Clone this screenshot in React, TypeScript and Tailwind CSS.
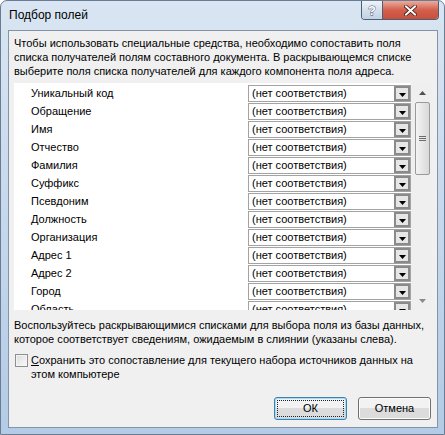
import React from "react";

const fields = [
  "Уникальный код",
  "Обращение",
  "Имя",
  "Отчество",
  "Фамилия",
  "Суффикс",
  "Псевдоним",
  "Должность",
  "Организация",
  "Адрес 1",
  "Адрес 2",
  "Город",
  "Область",
];

function Combo() {
  return (
    <div className="flex h-[17px] w-[163px] items-center border border-[#a3a3a3] bg-white">
      <span className="flex-1 pl-[3px] leading-[15px] whitespace-nowrap">(нет соответствия)</span>
      <div className="flex h-[15px] w-[16px] items-end justify-center border-2 border-[#8a8a8a] bg-[#e6e6e6] pb-[2px]">
        <svg width="7" height="4" viewBox="0 0 7 4">
          <path d="M0 0h7L3.5 4z" fill="#000" />
        </svg>
      </div>
    </div>
  );
}

function ScrollBar() {
  return (
    <div className="flex w-[21px] flex-col items-center bg-[#efefef] pl-[2px]">
      <div className="flex h-[19px] items-center justify-center">
        <svg width="7" height="4" viewBox="0 0 7 4">
          <path d="M3.5 0L7 4H0z" fill="#505050" />
        </svg>
      </div>
      <div className="flex h-[73px] w-[15px] items-center justify-center rounded-[2px] border border-[#9a9a9a] bg-gradient-to-r from-[#f4f4f4] to-[#d9d9d9]">
        <svg width="7" height="6" viewBox="0 0 7 6">
          <path d="M0 0.5h7M0 2.5h7M0 4.5h7" stroke="#6d6d6d" strokeWidth="1" />
        </svg>
      </div>
      <div className="flex-1" />
      <div className="flex h-[18px] items-center justify-center">
        <svg width="7" height="4" viewBox="0 0 7 4">
          <path d="M0 0h7L3.5 4z" fill="#8a8a8a" />
        </svg>
      </div>
    </div>
  );
}

function Button({ children, focused }: { children: React.ReactNode; focused?: boolean }) {
  return (
    <div
      className={
        "flex h-[23px] w-[73px] items-center justify-center rounded-[3px] border bg-gradient-to-b from-[#f2f2f2] from-50% to-[#dcdcdc] to-50% " +
        (focused ? "border-[#3c7fb1] shadow-[inset_0_0_0_1px_#a7dbf6]" : "border-[#707070] shadow-[inset_0_0_0_1px_#fcfcfc]")
      }
    >
      {focused ? (
        <div className="flex h-[17px] w-[67px] items-center justify-center border border-dotted border-[#222]">
          {children}
        </div>
      ) : (
        children
      )}
    </div>
  );
}

export default function App() {
  return (
    <div
      className="h-[435px] w-[445px] overflow-hidden rounded-t-[7px] border border-[#6a7c92] bg-gradient-to-b from-[#d9e5f2] to-[#b3cbe6] text-[11px] text-black"
      style={{ fontFamily: '"Liberation Sans", Arial, sans-serif' }}
    >
      <div className="flex h-[29px] items-start">
        <div className="pl-[8px] pt-[7px] text-[12px] leading-[15px] text-black">Подбор полей</div>
        <div className="ml-auto mr-[5px] flex h-[19px] overflow-hidden rounded-b-[4px] border border-t-0 border-[#4e5f75]">
          <div className="flex w-[21px] items-center justify-center border-r border-[#4e5f75] bg-gradient-to-b from-[#eef3f9] via-[#d3dfec] to-[#c2d2e5]">
            <span className="text-[13px] font-bold leading-none text-white [-webkit-text-stroke:0.8px_#3a4a5e] [paint-order:stroke]">?</span>
          </div>
          <div className="flex w-[55px] items-center justify-center bg-gradient-to-b from-[#e9ab9e] via-[#d35f4c] to-[#c9503b]">
            <svg width="13" height="11" viewBox="0 0 13 11">
              <path d="M2 1.5l9 8M11 1.5l-9 8" stroke="#3b1b17" strokeWidth="3.6" strokeLinecap="square" />
              <path d="M2 1.5l9 8M11 1.5l-9 8" stroke="#fff" strokeWidth="2" strokeLinecap="square" />
            </svg>
          </div>
        </div>
      </div>

      <div className="ml-[7px] flex h-[398px] w-[430px] flex-col border border-[#8593a6] bg-[#f0f0f0] pl-[5px]">
        <p className="mt-[5px] w-[410px] leading-[14px]">
          Чтобы использовать специальные средства, необходимо сопоставить поля списка получателей полям
          составного документа. В раскрывающемся списке выберите поля списка получателей для каждого
          компонента поля адреса.
        </p>

        <div className="mt-[5px] flex h-[227px] w-[418px] overflow-hidden">
          <div className="w-[397px] bg-white pt-px">
            {fields.map((f) => (
              <div key={f} className="flex h-[18px] items-center">
                <div className="w-[234px] pl-[17px] whitespace-nowrap">{f}</div>
                <Combo />
              </div>
            ))}
          </div>
          <ScrollBar />
        </div>

        <p className="mt-[8px] leading-[14px]">
          Воспользуйтесь раскрывающимися списками для выбора поля из базы данных,
          <br />
          которое соответствует сведениям, ожидаемым в слиянии (указаны слева).
        </p>

        <div className="mt-[7px] flex items-start">
          <div className="mt-px ml-px h-[13px] w-[13px] shrink-0 border border-[#8e8f8f] bg-gradient-to-br from-[#dcdcdc] to-[#fbfbfb] shadow-[inset_0_0_0_1px_#f4f4f4]" />
          <p className="ml-[3px] w-[390px] leading-[14px] first-letter:underline">
            Сохранить это сопоставление для текущего набора источников данных на этом компьютере
          </p>
        </div>

        <div className="mt-auto mb-[7px] flex justify-end gap-[11px] pr-[6px]">
          <Button focused>ОК</Button>
          <Button>Отмена</Button>
        </div>
      </div>
    </div>
  );
}
